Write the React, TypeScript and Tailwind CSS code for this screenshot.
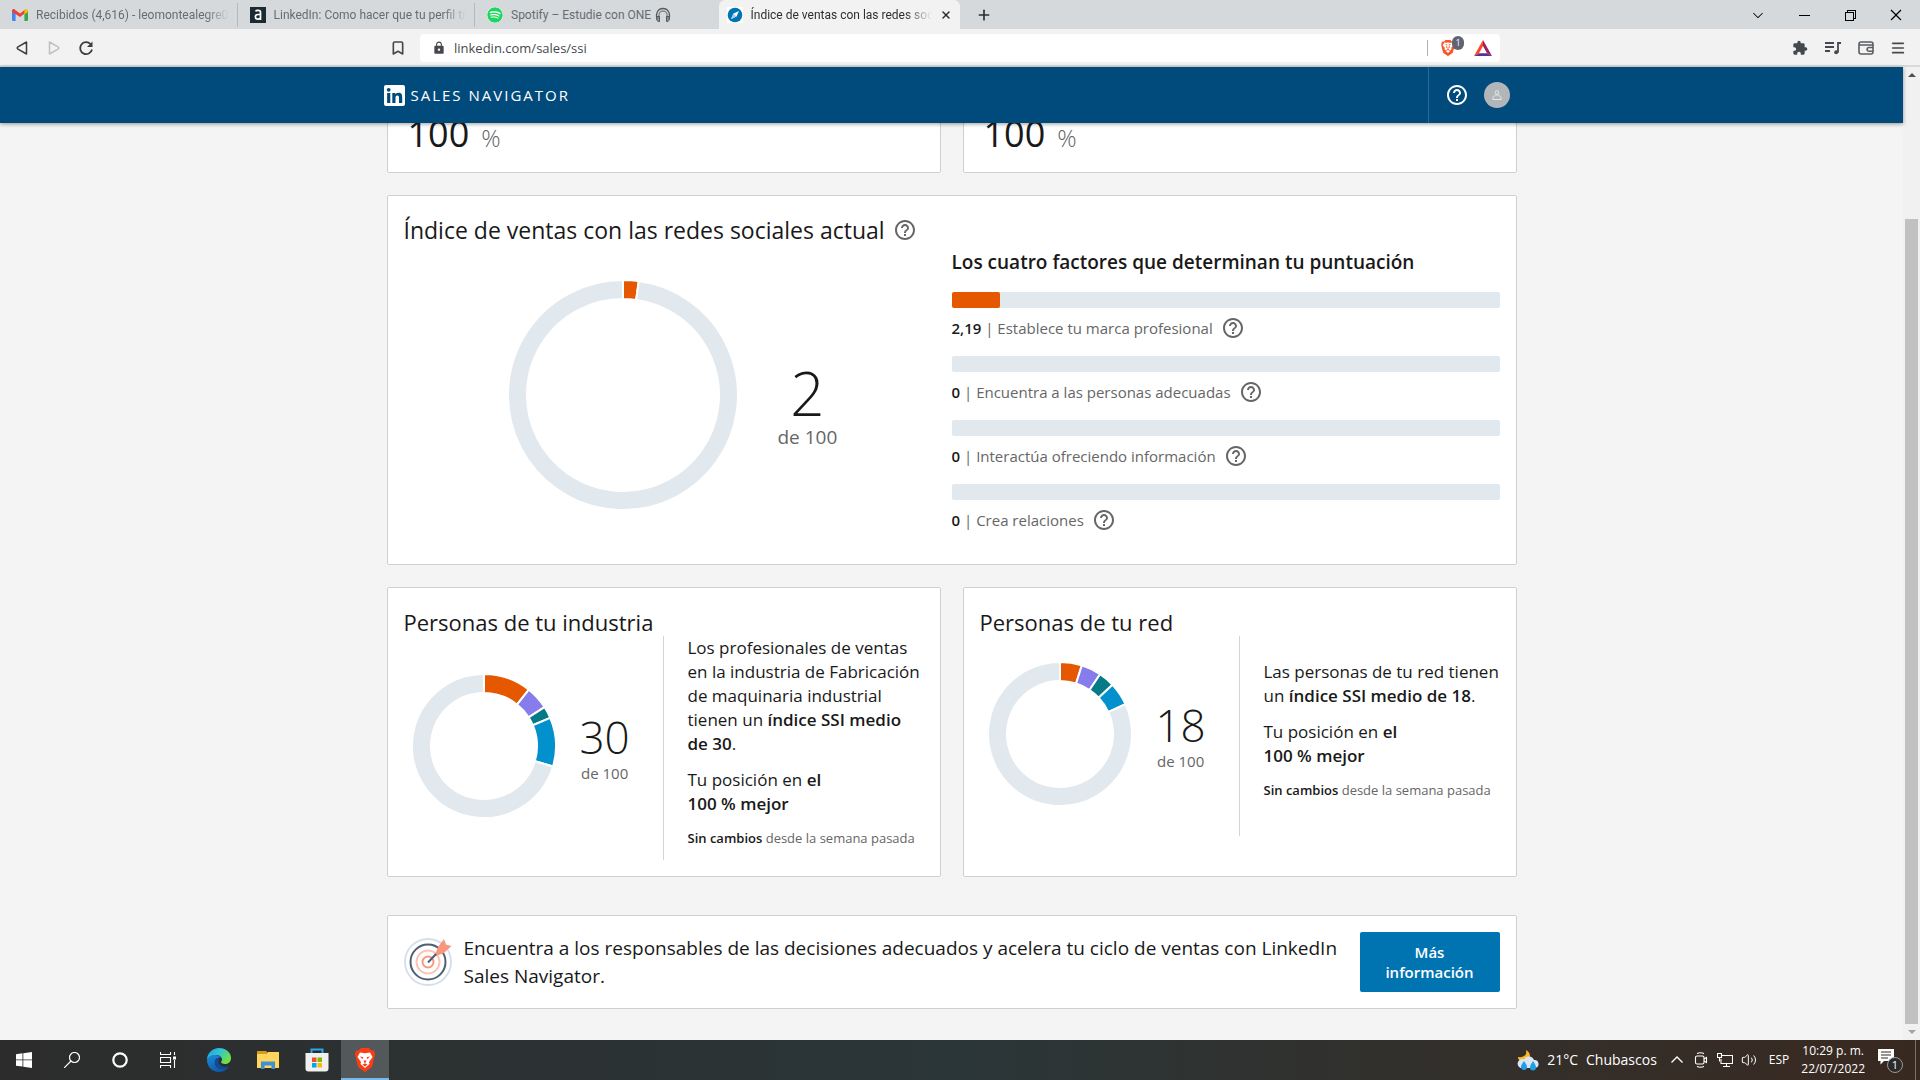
import type { ReactNode } from "react";
import { Bookmark, Menu, Plus, Volume2, X } from "lucide-react";
import { FaSpotify } from "react-icons/fa";
import { MdExtension, MdHelpOutline, MdLock } from "react-icons/md";
import { SiBrave } from "react-icons/si";
import {
  VscChromeClose,
  VscChromeMinimize,
  VscChromeRestore,
  VscChevronDown,
} from "react-icons/vsc";

const ORANGE = "#e65800";
const PURPLE = "#877ceb";
const TEAL = "#067a87";
const BLUE = "#0391ce";
const TRACK = "#e1e8ee";

type Segment = { value: number; color: string };

const INDUSTRY: Segment[] = [
  { value: 10.7, color: ORANGE },
  { value: 5.2, color: PURPLE },
  { value: 2.7, color: TEAL },
  { value: 11, color: BLUE },
];

const NETWORK: Segment[] = [
  { value: 4.9, color: ORANGE },
  { value: 4.5, color: PURPLE },
  { value: 3.6, color: TEAL },
  { value: 5.2, color: BLUE },
];

const FACTORS = [
  { score: 2.19, label: "Establece tu marca profesional" },
  { score: 0, label: "Encuentra a las personas adecuadas" },
  { score: 0, label: "Interactúa ofreciendo información" },
  { score: 0, label: "Crea relaciones" },
];

function sectorPath(c: number, outer: number, inner: number, from: number, to: number) {
  const point = (r: number, pct: number) => {
    const a = (pct / 100) * Math.PI * 2;
    return `${c + r * Math.sin(a)} ${c - r * Math.cos(a)}`;
  };
  const large = to - from > 50 ? 1 : 0;
  return `M${point(outer, from)}A${outer} ${outer} 0 ${large} 1 ${point(outer, to)}L${point(
    inner,
    to,
  )}A${inner} ${inner} 0 ${large} 0 ${point(inner, from)}Z`;
}

function Donut({ size, segments }: { size: number; segments: Segment[] }) {
  const used = segments.reduce((sum, s) => sum + s.value, 0);
  const all = [...segments, { value: 100 - used, color: TRACK }];
  const outer = size / 2;
  let start = 0;

  return (
    <svg width={size} height={size} className="shrink-0" aria-hidden="true">
      {all.map((s, i) => {
        const from = start;
        start += s.value;
        return (
          <path
            key={i}
            d={sectorPath(outer, outer, outer - 19, from, start)}
            fill={s.color}
            stroke="#fff"
            strokeWidth="2"
          />
        );
      })}
    </svg>
  );
}

function HelpButton() {
  return (
    <button type="button" aria-label="Más información" className="text-[#666]">
      <MdHelpOutline className="size-6" />
    </button>
  );
}

function Card({ className = "", children }: { className?: string; children: ReactNode }) {
  return (
    <section className={`rounded-xs border border-[#cfcfcf] bg-white ${className}`}>
      {children}
    </section>
  );
}

function GmailIcon() {
  return (
    <svg viewBox="0 0 16 12" className="h-3 w-4 shrink-0">
      <path d="M0 1.6V11a1 1 0 0 0 1 1h2.6V4.5z" fill="#4285f4" />
      <path d="M16 1.6V11a1 1 0 0 1-1 1h-2.6V4.5z" fill="#34a853" />
      <path d="M0 1.6C0 .2 1.500-.5 2.700.4L8 4.400 13.300.4V4L8 8 0 2.800z" fill="#ea4335" />
      <path d="M12.400 1.100l.9-.7C14.500-.5 16 .2 16 1.600v1.200l-3.600 2.600z" fill="#fbbc04" />
    </svg>
  );
}

function AluraIcon() {
  return (
    <svg viewBox="0 0 16 16" className="size-4 shrink-0">
      <path d="M0 0h16v16H0z" fill="#1c2b33" />
      <path
        d="M5.500 4.400c1-1.500 5-1.500 5 .8V13M10.500 7.500H8c-3.500 0-3.500 4.700 0 4.700 1.500 0 2.500-.8 2.500-2.200"
        fill="none"
        stroke="#fff"
        strokeWidth="1.700"
      />
    </svg>
  );
}

function CompassIcon() {
  return (
    <svg viewBox="0 0 16 16" className="size-4 shrink-0">
      <path d="M0 0h16v16H0z" fill="#fff" />
      <circle cx="8" cy="8" r="7.300" fill="#0073b1" />
      <path d="M12 4L9.500 9.500 4 12l2.500-5.500z" fill="#fff" />
      <path d="M4 12l2.500-5.500 3 3z" fill="#9fd0ea" />
    </svg>
  );
}

function HeadphonesIcon() {
  return (
    <svg viewBox="0 0 16 16" className="size-4 shrink-0" fill="none" stroke="#55595c">
      <path d="M2.500 13C0 7.500 2.500 1.500 8 1.500S16 7.500 13.500 13" strokeWidth="1.300" />
      <path d="M4.500 12C3 7 4.500 4 8 4s5 3 3.500 8" strokeWidth="1" />
      <path d="M2 9.500h2.500v5H3c-1.300-1-1.500-3-1-5zM14 9.500h-2.500v5H13c1.300-1 1.500-3 1-5z" fill="#8a8e91" />
    </svg>
  );
}

function Tab({ icon, title }: { icon: ReactNode; title: string }) {
  return (
    <button
      type="button"
      className="flex h-full min-w-0 flex-1 items-center gap-2 pl-3 text-left text-[#686c70]"
    >
      {icon}
      <span className="min-w-0 flex-1 overflow-hidden whitespace-nowrap [mask-image:linear-gradient(to_right,black_88%,transparent)]">
        {title}
      </span>
      <span className="h-6 w-px bg-[#b4b8bb]" />
    </button>
  );
}

function TabStrip() {
  return (
    <div className="flex h-[29px] items-center justify-between bg-[#d5d9dc] font-['Roboto',sans-serif] text-xs">
      <div className="flex h-full w-1/2 items-center">
        <Tab icon={<GmailIcon />} title="Recibidos (4,616) - leomontealegre001" />
        <Tab icon={<AluraIcon />} title="LinkedIn: Como hacer que tu perfil trab" />
        <button
          type="button"
          className="flex h-full min-w-0 flex-1 items-center gap-2 pl-3 text-[#686c70]"
        >
          <FaSpotify className="size-4 shrink-0 rounded-full bg-white text-[#1ed760]" />
          <span className="flex items-center gap-1 whitespace-nowrap">
            Spotify – Estudie con ONE
            <HeadphonesIcon />
          </span>
        </button>
        <div className="ml-1.5 flex h-full min-w-0 flex-1 items-center gap-2 rounded-t-md bg-[#f2f2f2] px-2 text-[#2c2f32]">
          <CompassIcon />
          <span className="min-w-0 flex-1 overflow-hidden whitespace-nowrap [mask-image:linear-gradient(to_right,black_85%,transparent)]">
            Índice de ventas con las redes soc
          </span>
          <button type="button" aria-label="Cerrar pestaña">
            <X className="size-3" strokeWidth={3} />
          </button>
        </div>
      </div>
      <div className="flex flex-1 items-center justify-between pr-4 pl-4 text-black">
        <button type="button" aria-label="Nueva pestaña" className="text-[#2c2f32]">
          <Plus className="size-4" strokeWidth={2.5} />
        </button>
        <div className="flex items-center gap-[30px]">
          <button type="button" aria-label="Buscar pestañas">
            <VscChevronDown className="size-4" />
          </button>
          <button type="button" aria-label="Minimizar">
            <VscChromeMinimize className="size-4" />
          </button>
          <button type="button" aria-label="Restaurar">
            <VscChromeRestore className="size-4" />
          </button>
          <button type="button" aria-label="Cerrar">
            <VscChromeClose className="size-4" />
          </button>
        </div>
      </div>
    </div>
  );
}

function Toolbar() {
  return (
    <div className="flex h-[38px] items-center border-b-2 border-[#dadada] bg-[#f2f2f2] pt-0.5 text-[#45494d]">
      <div className="flex flex-1 items-center justify-between px-3.5">
        <div className="flex items-center gap-4">
          <button type="button" aria-label="Atrás">
            <svg viewBox="0 0 16 16" className="size-4" fill="none" stroke="#3b3e41" strokeWidth="1.500">
              <path d="M12.500 2v12L4 9.200q-1.600-1.200 0-2.400z" strokeLinejoin="round" />
            </svg>
          </button>
          <button type="button" aria-label="Adelante">
            <svg viewBox="0 0 16 16" className="size-4" fill="none" stroke="#bdbfc1" strokeWidth="1.500">
              <path d="M3.500 2v12L12 9.200q1.600-1.200 0-2.400z" strokeLinejoin="round" />
            </svg>
          </button>
          <button type="button" aria-label="Recargar">
            <svg viewBox="0 0 16 16" className="size-4" fill="none" stroke="#3b3e41" strokeWidth="1.800">
              <path d="M14 9.500A6 6 0 1 1 12.500 4" />
              <path d="M14.500 1.500v5.500H9z" fill="#3b3e41" stroke="none" />
            </svg>
          </button>
        </div>
        <button type="button" aria-label="Agregar marcador">
          <Bookmark className="size-4" strokeWidth={2.5} />
        </button>
      </div>
      <div className="flex h-7 w-[1080px] items-center rounded bg-white pr-2 pl-3">
        <MdLock className="mr-2 size-3.5" />
        <input
          aria-label="Dirección"
          defaultValue="linkedin.com/sales/ssi"
          className="h-full min-w-0 flex-1 bg-transparent text-[13px] text-[#45494d] outline-none"
        />
        <span className="mr-3 h-4 w-px bg-[#b0b0b0]" />
        <button type="button" aria-label="Brave Shields" className="relative mr-4.5">
          <SiBrave className="size-4 text-[#fb542b]" />
          <span className="absolute -top-1 left-3 flex h-3.5 w-3 items-center justify-center rounded-full bg-[#5f6374] text-[9px] text-white">
            1
          </span>
        </button>
        <button type="button" aria-label="Brave Rewards">
          <svg viewBox="0 0 18 16" className="h-4 w-[18px]">
            <path d="M9 0L0 16l5-2.800L9 6z" fill="#ff4724" />
            <path d="M9 0l9 16-5-2.800L9 6z" fill="#9e1f63" />
            <path d="M0 16h18l-5-2.800H5z" fill="#662d91" />
          </svg>
        </button>
      </div>
      <div className="flex flex-1 items-center justify-end gap-4 px-3.5">
        <button type="button" aria-label="Extensiones">
          <MdExtension className="size-4" />
        </button>
        <button type="button" aria-label="Lista de reproducción">
          <svg viewBox="0 0 18 16" className="h-4 w-[18px]" fill="none" stroke="#45494d" strokeWidth="1.800">
            <path d="M1 3h9M1 7h9M1 11h5M14 12.500V3h3" />
            <circle cx="12.200" cy="12.300" r="2" fill="#45494d" stroke="none" />
          </svg>
        </button>
        <button type="button" aria-label="Cartera">
          <svg viewBox="0 0 16 16" className="size-4" fill="none" stroke="#5a5e62" strokeWidth="1.600">
            <rect x="1" y="2" width="14" height="12" rx="2" />
            <path d="M1 5h14M15 7.500h-4a1.800 1.800 0 0 0 0 3.800h4" />
          </svg>
        </button>
        <button type="button" aria-label="Menú">
          <Menu className="size-4" strokeWidth={2.5} />
        </button>
      </div>
    </div>
  );
}

function SiteHeader() {
  return (
    <header className="relative z-10 h-14 shrink-0 bg-[#004b7c] shadow-[0_1px_4px_rgba(0,0,0,0.4)]">
      <div className="mx-auto flex h-full max-w-[1136px] items-center justify-between pr-2.5">
        <a href="#" className="flex items-center gap-1.5 text-white">
          <svg viewBox="0 0 21 21" className="size-[21px]">
            <rect width="21" height="21" rx="2" fill="#fff" />
            <circle cx="4.700" cy="4.800" r="1.900" fill="#004b7c" />
            <path
              d="M3.100 8h3.200v10H3.100zM8.300 8h3v1.400c.5-.9 1.600-1.700 3.200-1.700 3 0 3.700 1.900 3.700 4.600V18H15v-5c0-1.300-.1-2.600-1.700-2.600s-1.800 1.200-1.800 2.500V18H8.300z"
              fill="#004b7c"
            />
          </svg>
          <span className="text-[15px] tracking-[2px]">SALES NAVIGATOR</span>
        </a>
        <div className="flex h-full items-center gap-[15px] border-l border-[#2c6a94] pl-4">
          <button type="button" aria-label="Ayuda" className="text-white">
            <MdHelpOutline className="size-6" />
          </button>
          <button
            type="button"
            aria-label="Cuenta"
            className="flex size-[26px] items-center justify-center rounded-full bg-[#b3b6b9]"
          >
            <svg viewBox="0 0 10 10" className="size-2.5" fill="none" stroke="#e6e8ea">
              <circle cx="5" cy="2.500" r="1.800" />
              <path d="M3.500 5L.8 7.500v2h8.400v-2L6.500 5z" />
            </svg>
          </button>
        </div>
      </div>
    </header>
  );
}

function RankCard() {
  return (
    <Card className="flex items-baseline gap-3 px-5 pt-[26px] pb-3">
      <p className="text-4xl leading-[52px]">100</p>
      <p className="text-2xl font-light text-[#666]">%</p>
    </Card>
  );
}

function CurrentIndex() {
  return (
    <Card className="grid grid-cols-2 px-4 pt-5 pb-4">
      <div>
        <h2 className="flex items-center gap-2 text-[23px] leading-7 whitespace-nowrap">
          Índice de ventas con las redes sociales actual
          <HelpButton />
        </h2>
        <div className="flex items-center gap-10 pt-9 pl-26">
          <Donut size={230} segments={[{ value: 2.19, color: ORANGE }]} />
          <div className="pt-6 text-center">
            <p className="text-6xl font-light">2</p>
            <p className="text-[19px] leading-7 text-[#666]">de 100</p>
          </div>
        </div>
      </div>
      <div className="pt-8">
        <h3 className="text-[19px] leading-7 font-semibold">
          Los cuatro factores que determinan tu puntuación
        </h3>
        <ul className="pt-4">
          {FACTORS.map((f) => (
            <li key={f.label} className="h-16">
              <div className="h-4 rounded-xs bg-[#e1e8ee]">
                <div
                  className="h-4 rounded-xs bg-[#e65800]"
                  style={{ width: `${(f.score / 25) * 100}%` }}
                />
              </div>
              <div className="flex h-10 items-center gap-2 text-[15px] text-[#666]">
                <p>
                  <b className="font-semibold text-[#191919]">{String(f.score).replace(".", ",")}</b>
                  {" | "}
                  {f.label}
                </p>
                <HelpButton />
              </div>
            </li>
          ))}
        </ul>
      </div>
    </Card>
  );
}

type PeopleCardProps = {
  title: string;
  score: number;
  segments: Segment[];
  children: ReactNode;
};

function PeopleCard({ title, score, segments, children }: PeopleCardProps) {
  return (
    <Card className="px-4 pt-5 pb-4">
      <h2 className="text-[22px] leading-7">{title}</h2>
      <div className="flex min-h-[200px]">
        <div className="flex w-[260px] shrink-0 items-center gap-6 border-r border-[#d3d6d8] pb-1 pl-2">
          <Donut size={144} segments={segments} />
          <div className="pt-1.5 text-center">
            <p className="text-[44px] leading-12 font-light">{score}</p>
            <p className="text-[15px] leading-6 text-[#666]">de 100</p>
          </div>
        </div>
        <div className="flex flex-1 flex-col justify-center gap-3 pb-3 pl-6 text-[17px] leading-6">
          {children}
          <p className="w-40">
            Tu posición en <b className="font-semibold">el 100 % mejor</b>
          </p>
          <p className="text-[13px] leading-5 whitespace-nowrap text-[#666]">
            <b className="font-semibold text-[#191919]">Sin cambios</b> desde la semana pasada
          </p>
        </div>
      </div>
    </Card>
  );
}

function TargetIcon() {
  return (
    <svg viewBox="0 0 48 48" className="size-12 shrink-0" fill="none">
      <circle cx="24" cy="24" r="23" stroke="#d3dfeb" strokeWidth="1.800" />
      <circle cx="24" cy="24" r="17.500" stroke="#4d5f75" strokeWidth="2" />
      <circle cx="24" cy="24" r="11.500" stroke="#fcc4b4" strokeWidth="2" />
      <circle cx="24" cy="24" r="5.500" stroke="#f8977c" strokeWidth="2" />
      <path d="M40 1l2 5.500 5.500 1.500-7.500 7-9.500 3.500L34 9z" fill="#f8977c" />
      <path d="M24 24.500l8-8.500" stroke="#4d5f75" strokeWidth="2" />
    </svg>
  );
}

function Banner() {
  return (
    <Card className="mt-4 flex items-center px-4 py-4">
      <TargetIcon />
      <p className="flex-1 pr-4 pl-3 text-[19px] leading-7">
        Encuentra a los responsables de las decisiones adecuados y acelera tu ciclo de ventas con
        LinkedIn Sales Navigator.
      </p>
      <a
        href="#"
        className="flex h-15 w-[140px] items-center justify-center rounded-xs bg-[#0073b1] px-4 text-center text-[15px] leading-5 font-semibold text-white"
      >
        Más información
      </a>
    </Card>
  );
}

function Scrollbar() {
  return (
    <div className="flex w-[17px] shrink-0 flex-col items-center bg-[#f1f1f1] py-1.5" aria-hidden="true">
      <svg viewBox="0 0 8 4" className="h-1 w-2">
        <path d="M0 4l4-4 4 4z" fill="#505050" />
      </svg>
      <div className="mt-[142px] w-[13px] flex-1 bg-[#c1c1c1]" />
      <svg viewBox="0 0 8 4" className="mt-1.5 h-1 w-2">
        <path d="M0 0l4 4 4-4z" fill="#a3a3a3" />
      </svg>
    </div>
  );
}

function EdgeIcon() {
  return (
    <svg viewBox="0 0 24 24" className="size-6">
      <defs>
        <linearGradient id="edge-top" x1="0" y1="0" x2="1" y2="0.500">
          <stop offset="0" stopColor="#1f9de0" />
          <stop offset="0.500" stopColor="#2fc3d8" />
          <stop offset="1" stopColor="#6fe04a" />
        </linearGradient>
        <linearGradient id="edge-side" x1="0" y1="0" x2="0.600" y2="1">
          <stop offset="0" stopColor="#1b8fd8" />
          <stop offset="1" stopColor="#0f55a5" />
        </linearGradient>
      </defs>
      <path d="M0 12C0 5 5.500 0 12 0c7 0 12 4.500 12 10 0 4-3 6-6 6-2 0-4-.8-4-2 0-.5 1-1 1-2.500C15 9 12.500 7 9 7c-5 0-8 3-9 5z" fill="url(#edge-top)" />
      <path d="M0 12c1-3 4-5 8-5 3 0 5 1 6 2.500C10 9 7.500 12 8 15.500c.7 4 4.500 6 8.500 5.500 2-.3 4-1.200 5.500-2.500-2 3.500-5.500 5.500-10 5.500C5 24 0 18.500 0 12z" fill="url(#edge-side)" />
      <path d="M13.500 9.500C10 9 7.500 12 8 15.500c.7 4 4.500 6 8.500 5.500 2-.3 4-1.200 5.500-2.500-.6-.5-2 .7-5 .2-3.500-.5-5.700-3.200-5.500-5.700.1-1.500 1-2.500 2-3.500z" fill="#134a93" />
    </svg>
  );
}

function Taskbar() {
  return (
    <footer className="flex h-10 shrink-0 items-center justify-between bg-linear-to-r from-[#2c2c2c] via-[#2b3638] to-[#382920] text-white">
      <div className="flex h-full items-center">
        <button type="button" aria-label="Inicio" className="flex w-12 justify-center">
          <svg viewBox="0 0 16 16" className="size-4" fill="#fff">
            <path d="M0 2.200L6.500 1.300v6.200H0zM7.300 1.200L16 0v7.500H7.300zM0 8.300h6.500v6.300L0 13.700zM7.300 8.300H16V16l-8.700-1.200z" />
          </svg>
        </button>
        <button type="button" aria-label="Buscar" className="flex w-12 justify-center">
          <svg viewBox="0 0 16 16" className="size-4" fill="none" stroke="#fff" strokeWidth="1.200">
            <circle cx="10.500" cy="5.500" r="5" />
            <path d="M7 9l-7 7" />
          </svg>
        </button>
        <button type="button" aria-label="Cortana" className="flex w-12 justify-center">
          <svg viewBox="0 0 16 16" className="size-4" fill="none" stroke="#fff" strokeWidth="2.200">
            <circle cx="8" cy="8" r="6.700" />
          </svg>
        </button>
        <button type="button" aria-label="Vista de tareas" className="mr-0.5 flex w-12 justify-center">
          <svg viewBox="0 0 16 16" className="size-4" fill="none" stroke="#fff" strokeWidth="1.100">
            <path d="M.5 0v2.500h10V0M.5 16v-2.500h10V16M14.500 0v3M14.500 8v8" />
            <path d="M.5 5.500h10v5H.5z" />
            <path d="M13 4.500h3v3h-3z" fill="#fff" stroke="none" />
          </svg>
        </button>
        <button type="button" aria-label="Microsoft Edge" className="flex w-[49px] justify-center">
          <EdgeIcon />
        </button>
        <button type="button" aria-label="Explorador de archivos" className="flex w-[49px] justify-center">
          <svg viewBox="0 0 22 18" className="h-[18px] w-[22px]">
            <path d="M0 0h9l1.500 1.500L9 4H0z" fill="#d99a1b" />
            <path d="M0 3h9.500L11 1h11v16H0z" fill="#ffd55e" />
            <path d="M4 18v-7.500h14V18h-3.500v-3.500h-7V18z" fill="#3d8fd6" />
          </svg>
        </button>
        <button type="button" aria-label="Microsoft Store" className="flex w-[49px] justify-center">
          <svg viewBox="0 0 24 24" className="size-6">
            <path d="M6.500 6V1.500h11V6" fill="none" stroke="#2aa8ea" strokeWidth="2" />
            <path d="M.5 5h23v15.500a3 3 0 0 1-3 3h-17a3 3 0 0 1-3-3z" fill="#f0f0f0" />
            <path d="M7 9.500h4.500V14H7z" fill="#f25022" />
            <path d="M12.500 9.500H17V14h-4.500z" fill="#7fba00" />
            <path d="M7 15h4.500v4.500H7z" fill="#00a4ef" />
            <path d="M12.500 15H17v4.500h-4.500z" fill="#ffb900" />
          </svg>
        </button>
        <button
          type="button"
          aria-label="Brave"
          className="flex h-full w-12 items-center justify-center border-b-2 border-[#76b9ed] bg-[#53585a] pt-0.5"
        >
          <svg viewBox="0 0 20 24" className="h-6 w-5">
            <path d="M6 0h8l2.500 2.500L19 2.500 20 6l-2.500 11c-.6 2-1 2.500-2.500 3.600L10 24l-5-3.400C3.500 19.500 3.100 19 2.500 17L0 6l1-3.500h2.500z" fill="#fb3d16" />
            <path d="M5 4.500l5 .8 5-.8 2.500 4.500-3.500 5 .5 2-4.500 4-4.500-4 .5-2L2.500 9z" fill="#fff" />
            <path d="M5 8.500l3.500.8-1 1.700zM15 8.500l-3.500.8 1 1.700zM8.500 12.500L10 16l1.500-3.500zM7.500 16.500l2.500-1 2.500 1-2.500 2z" fill="#fb3d16" />
          </svg>
        </button>
      </div>
      <div className="flex h-full items-center">
        <button type="button" className="flex items-center gap-2 pr-3 text-sm">
          <svg viewBox="0 0 22 22" className="size-[22px]">
            <path d="M9 1c1 4-1 8-8 7 0 3 3 5 6 5s6-3 6-6-2-5-4-6z" fill="#fbb829" />
            <path d="M6 19a4.500 4.500 0 1 1 1-8.500 5.500 5.500 0 0 1 10 .5 4 4 0 0 1 1 8z" fill="#dbe6f5" />
            <path d="M7 12c2 3 3 4.500 3 6a3 3 0 0 1-6 0c0-1.500 1-3 3-6zM16 12c2 3 3 4.500 3 6.500a3 3 0 0 1-6 0c0-2 1-3.500 3-6.500z" fill="#1f9fe8" />
          </svg>
          <span>21°C</span>
          <span>Chubascos</span>
        </button>
        <button type="button" aria-label="Iconos ocultos" className="mr-2">
          <svg viewBox="0 0 16 16" className="size-4" fill="none" stroke="#fff" strokeWidth="1.300">
            <path d="M2.500 10.500L8 5l5.500 5.500" />
          </svg>
        </button>
        <button type="button" aria-label="Cámara" className="mr-2">
          <svg viewBox="0 0 16 16" className="size-4" fill="none" stroke="#fff" strokeWidth="1.100">
            <path d="M4 1.500q3.500-1.500 7 0M4 14.500q3.500 1.500 7 0M11 7l2.500-1.500v5L11 9" />
            <rect x="2.500" y="4" width="8.500" height="8" rx="1.500" />
          </svg>
        </button>
        <button type="button" aria-label="Red" className="mr-2">
          <svg viewBox="0 0 16 14" className="h-3.5 w-4" fill="none" stroke="#fff" strokeWidth="1.100">
            <path d="M5 2.500h10.500v8H4V6M9.500 10.500v3M6 13.500h7M.5.5h4v4h-4zM2.500 4.500v4" />
          </svg>
        </button>
        <button type="button" aria-label="Volumen" className="mr-3">
          <Volume2 className="size-4" strokeWidth={1.5} />
        </button>
        <button type="button" className="mr-3 text-xs">
          ESP
        </button>
        <button type="button" className="mr-3 text-center text-xs leading-[18px]">
          10:29 p. m.
          <br />
          22/07/2022
        </button>
        <button type="button" aria-label="Notificaciones" className="relative mr-3">
          <svg viewBox="0 0 26 26" className="size-[26px]">
            <path d="M1 2h16v12H7l-3.500 3.500V14H1z" fill="#fff" />
            <path d="M4 5h10M4 8h10M4 11h7" stroke="#382920" />
          </svg>
          <span className="absolute right-0 bottom-0 flex size-4 items-center justify-center rounded-full border border-[#999] bg-[#2b2b2b] text-[11px]">
            1
          </span>
        </button>
        <span className="mr-1 h-full w-px bg-[#77706b]" />
      </div>
    </footer>
  );
}

export default function App() {
  return (
    <div className="flex h-screen flex-col overflow-hidden font-['Open_Sans','Noto_Sans',sans-serif] text-[#191919]">
      <TabStrip />
      <Toolbar />
      <div className="flex min-h-0 flex-1">
        <div className="flex min-w-0 flex-1 flex-col bg-[#f4f4f4]">
          <SiteHeader />
          <main className="min-h-0 flex-1 overflow-hidden px-4">
            <div className="mx-auto -mt-[42px] flex max-w-[1130px] flex-col gap-[22px]">
              <div className="grid grid-cols-2 gap-[22px]">
                <RankCard />
                <RankCard />
              </div>
              <CurrentIndex />
              <div className="grid grid-cols-2 gap-[22px]">
                <PeopleCard title="Personas de tu industria" score={30} segments={INDUSTRY}>
                  <p>
                    Los profesionales de ventas en la industria de Fabricación de maquinaria
                    industrial tienen un <b className="font-semibold">índice SSI medio de 30</b>.
                  </p>
                </PeopleCard>
                <PeopleCard title="Personas de tu red" score={18} segments={NETWORK}>
                  <p>
                    Las personas de tu red tienen un{" "}
                    <b className="font-semibold">índice SSI medio de 18</b>.
                  </p>
                </PeopleCard>
              </div>
              <Banner />
            </div>
          </main>
        </div>
        <Scrollbar />
      </div>
      <Taskbar />
    </div>
  );
}
